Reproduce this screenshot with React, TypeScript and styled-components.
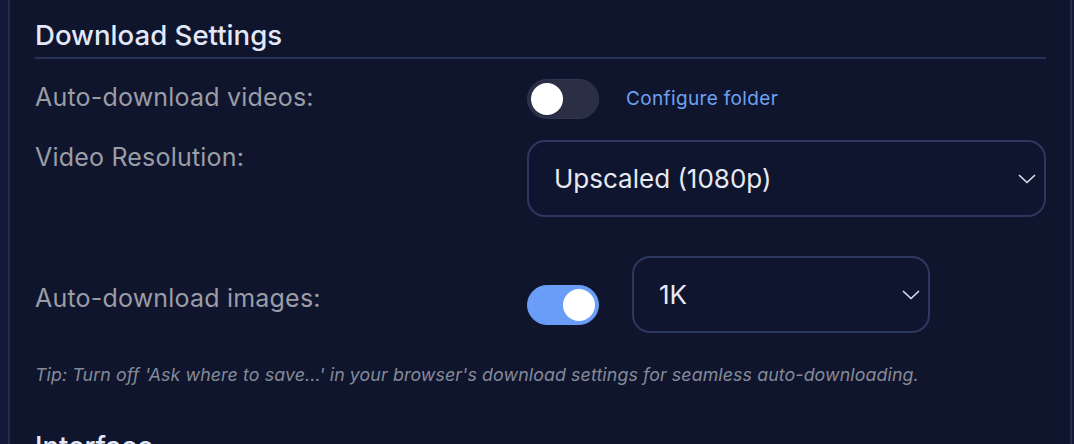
import * as React from 'react';
import styled, { createGlobalStyle } from 'styled-components';

const GlobalStyle = createGlobalStyle`
  html, body {
    margin: 0;
    padding: 0;
    background: #131a37;
    font-family: Inter, 'Noto Sans', sans-serif;
    overflow: hidden;
  }
`;

const Panel = styled.div`
  margin: 0 2px 0 8px;
  height: 444px;
  box-sizing: border-box;
  overflow: hidden;
  background: #10152e;
  border-left: 2px solid #222c4d;
  border-right: 2px solid #222c4d;
  padding: 18px 24px 0 25px;
`;

const SectionTitle = styled.h2`
  margin: 0;
  font-size: 27.6px;
  font-weight: 500;
  color: #e2e8f8;
  line-height: 34px;
  padding-bottom: 5px;
  border-bottom: 2px solid #27325a;
`;

const Row = styled.div<{ $top: number }>`
  display: flex;
  align-items: flex-start;
  margin-top: ${(p) => p.$top}px;
`;

const Label = styled.div<{ $offset?: number }>`
  width: 492px;
  flex-shrink: 0;
  font-size: 25px;
  letter-spacing: 0.2px;
  color: #9b9da6;
  line-height: 32px;
  margin-top: ${(p) => p.$offset ?? 0}px;
`;

const Controls = styled.div<{ $gap: number }>`
  display: flex;
  align-items: flex-start;
  gap: ${(p) => p.$gap}px;
`;

const Track = styled.div<{ $on: boolean }>`
  width: 72px;
  height: 40px;
  border-radius: 20px;
  box-sizing: border-box;
  background: ${(p) => (p.$on ? '#6a9df7' : '#2a2f46')};
  border: 1px solid ${(p) => (p.$on ? '#6a9df7' : '#30364f')};
  display: flex;
  align-items: center;
  justify-content: ${(p) => (p.$on ? 'flex-end' : 'flex-start')};
  padding: 0 3px;
  flex-shrink: 0;
`;

const Knob = styled.div`
  width: 32px;
  height: 32px;
  border-radius: 50%;
  background: #ffffff;
`;

const Link = styled.a`
  color: #6ea1f0;
  font-size: 19px;
  text-decoration: none;
  line-height: 40px;
  letter-spacing: 0.35px;
`;

const Select = styled.div<{ $width: number }>`
  width: ${(p) => p.$width}px;
  height: 77px;
  box-sizing: border-box;
  border: 2px solid #2c385e;
  border-radius: 18px;
  background: #10152f;
  display: flex;
  align-items: center;
  justify-content: space-between;
  padding: 0 8px 0 25px;
  font-size: 26px;
  font-weight: 400;
  color: #e6e9f1;
`;

const Tip = styled.p`
  margin: 31px 0 0;
  font-size: 17.8px;
  font-style: italic;
  color: #858a98;
  letter-spacing: 0.1px;
`;

const NextTitle = styled(SectionTitle)`
  margin-top: 44px;
  border-bottom: none;
`;

const Chevron = () => (
  <svg width="18" height="10" viewBox="0 0 18 10" fill="none">
    <path
      d="M1.5 1.5 L9 8.5 L16.5 1.5"
      stroke="#d9dde8"
      strokeWidth="1.7"
      strokeLinecap="round"
      strokeLinejoin="round"
    />
  </svg>
);

const Toggle = ({ on, offset }: { on: boolean; offset?: number }) => (
  <Track $on={on} style={offset ? { marginTop: offset } : undefined}>
    <Knob />
  </Track>
);

export default function App() {
  return (
    <React.Fragment>
      <GlobalStyle />
      <Panel>
        <SectionTitle>Download Settings</SectionTitle>
        <Row $top={20}>
          <Label $offset={2}>Auto-download videos:</Label>
          <Controls $gap={27}>
            <Toggle on={false} />
            <Link href="#">Configure folder</Link>
          </Controls>
        </Row>
        <Row $top={21}>
          <Label $offset={1}>Video Resolution:</Label>
          <Select $width={519}>
            <span>Upscaled (1080p)</span>
            <Chevron />
          </Select>
        </Row>
        <Row $top={39}>
          <Label $offset={26}>Auto-download images:</Label>
          <Controls $gap={33}>
            <Toggle on offset={29} />
            <Select $width={298}>
              <span>1K</span>
              <Chevron />
            </Select>
          </Controls>
        </Row>
        <Tip>
          Tip: Turn off 'Ask where to save...' in your browser's download
          settings for seamless auto-downloading.
        </Tip>
        <NextTitle>Interface</NextTitle>
      </Panel>
    </React.Fragment>
  );
}
